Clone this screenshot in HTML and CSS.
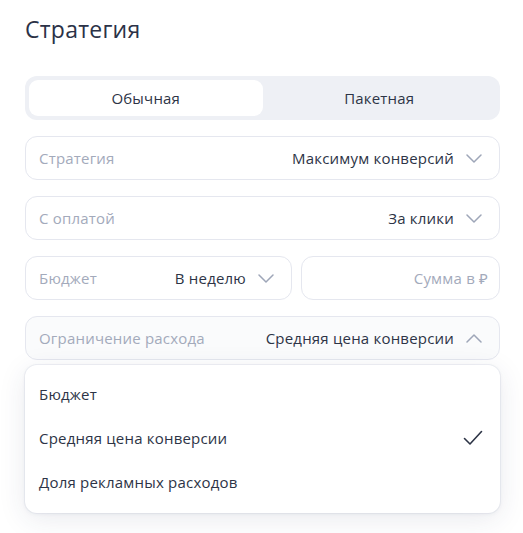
FILE: index.html
```html
<!DOCTYPE html>
<html lang="ru">
<head>
<meta charset="utf-8">
<title>Стратегия</title>
<link rel="stylesheet" href="styles.css">
</head>
<body>
<div class="panel">
  <h1 class="title">Стратегия</h1>
  <div class="segmented">
    <div class="seg seg-active">Обычная</div>
    <div class="seg">Пакетная</div>
  </div>
  <div class="field">
    <span class="label">Стратегия</span>
    <span class="value">Максимум конверсий</span>
    <svg class="chev" viewBox="0 0 16 9" width="16" height="9"><path d="M1 1l7 7 7-7" fill="none" stroke="currentColor" stroke-width="1.5" stroke-linecap="round" stroke-linejoin="round"/></svg>
  </div>
  <div class="field">
    <span class="label">С оплатой</span>
    <span class="value">За клики</span>
    <svg class="chev" viewBox="0 0 16 9" width="16" height="9"><path d="M1 1l7 7 7-7" fill="none" stroke="currentColor" stroke-width="1.5" stroke-linecap="round" stroke-linejoin="round"/></svg>
  </div>
  <div class="row">
    <div class="field field-budget">
      <span class="label">Бюджет</span>
      <span class="value">В неделю</span>
      <svg class="chev" viewBox="0 0 16 9" width="16" height="9"><path d="M1 1l7 7 7-7" fill="none" stroke="currentColor" stroke-width="1.5" stroke-linecap="round" stroke-linejoin="round"/></svg>
    </div>
    <div class="field field-sum">
      <span class="placeholder">Сумма в ₽</span>
    </div>
  </div>
  <div class="select-wrap">
    <div class="field field-open">
      <span class="label">Ограничение расхода</span>
      <span class="value">Средняя цена конверсии</span>
      <svg class="chev" viewBox="0 0 16 9" width="16" height="9"><path d="M1 8l7-7 7 7" fill="none" stroke="currentColor" stroke-width="1.5" stroke-linecap="round" stroke-linejoin="round"/></svg>
    </div>
    <div class="menu">
      <div class="item">Бюджет</div>
      <div class="item">Средняя цена конверсии
        <svg class="check" viewBox="0 0 20 16" width="20" height="16"><path d="M1.5 8.5l5.5 5.5 11.5-12.5" fill="none" stroke="currentColor" stroke-width="1.6" stroke-linecap="round" stroke-linejoin="round"/></svg>
      </div>
      <div class="item">Доля рекламных расходов</div>
    </div>
  </div>
</div>
</body>
</html>
```

FILE: styles.css
```css
html, body {
  margin: 0;
  padding: 0;
  background: #ffffff;
}
body {
  font-family: "Open Sans", "Noto Sans", sans-serif;
  color: #2d3446;
}
.panel {
  padding: 15px 23px 20px 25px;
  display: flex;
  flex-direction: column;
  gap: 16px;
}
.title {
  margin: 0 0 17px 0;
  font-size: 23px;
  line-height: 28px;
  font-weight: 500;
  color: #2b3247;
  letter-spacing: 0.25px;
}
.segmented {
  display: grid;
  grid-template-columns: 1fr 1fr;
  height: 44px;
  padding: 4px;
  box-sizing: border-box;
  background: #eef0f5;
  border-radius: 12px;
}
.seg {
  display: flex;
  align-items: center;
  justify-content: center;
  font-size: 15px;
  letter-spacing: 0.2px;
  color: #2d3446;
  border-radius: 9px;
}
.seg-active {
  background: #ffffff;
}
.field {
  height: 44px;
  box-sizing: border-box;
  border: 1px solid #e5e7ef;
  border-radius: 12px;
  display: flex;
  align-items: center;
  padding: 0 17px 0 13px;
  font-size: 15px;
  letter-spacing: 0.2px;
  background: #ffffff;
}
.label {
  color: #a3aabb;
  flex: 1;
  white-space: nowrap;
}
.value {
  color: #2d3446;
  white-space: nowrap;
}
.chev {
  color: #9ea6b8;
  margin-left: 12px;
  flex: none;
}
.row {
  display: flex;
  gap: 9px;
}
.field-budget {
  width: 267px;
  flex: none;
}
.field-sum {
  flex: 1;
  justify-content: flex-end;
  padding-right: 11px;
}
.placeholder {
  color: #a3aabb;
}
.select-wrap {
  display: flex;
  flex-direction: column;
  gap: 5px;
}
.field-open {
  background: #fafbfc;
}
.menu {
  background: #ffffff;
  border-radius: 12px;
  padding: 7px 0 9px;
  box-shadow: 0 0 0 1px rgba(200, 205, 220, 0.25), 0 6px 28px rgba(40, 50, 90, 0.10), 0 1px 4px rgba(40, 50, 90, 0.06);
}
.item {
  height: 44px;
  display: flex;
  align-items: center;
  justify-content: space-between;
  padding: 0 17px 0 14px;
  font-size: 15px;
  letter-spacing: 0.2px;
  color: #2d3446;
}
.check {
  color: #2d3446;
}
```
